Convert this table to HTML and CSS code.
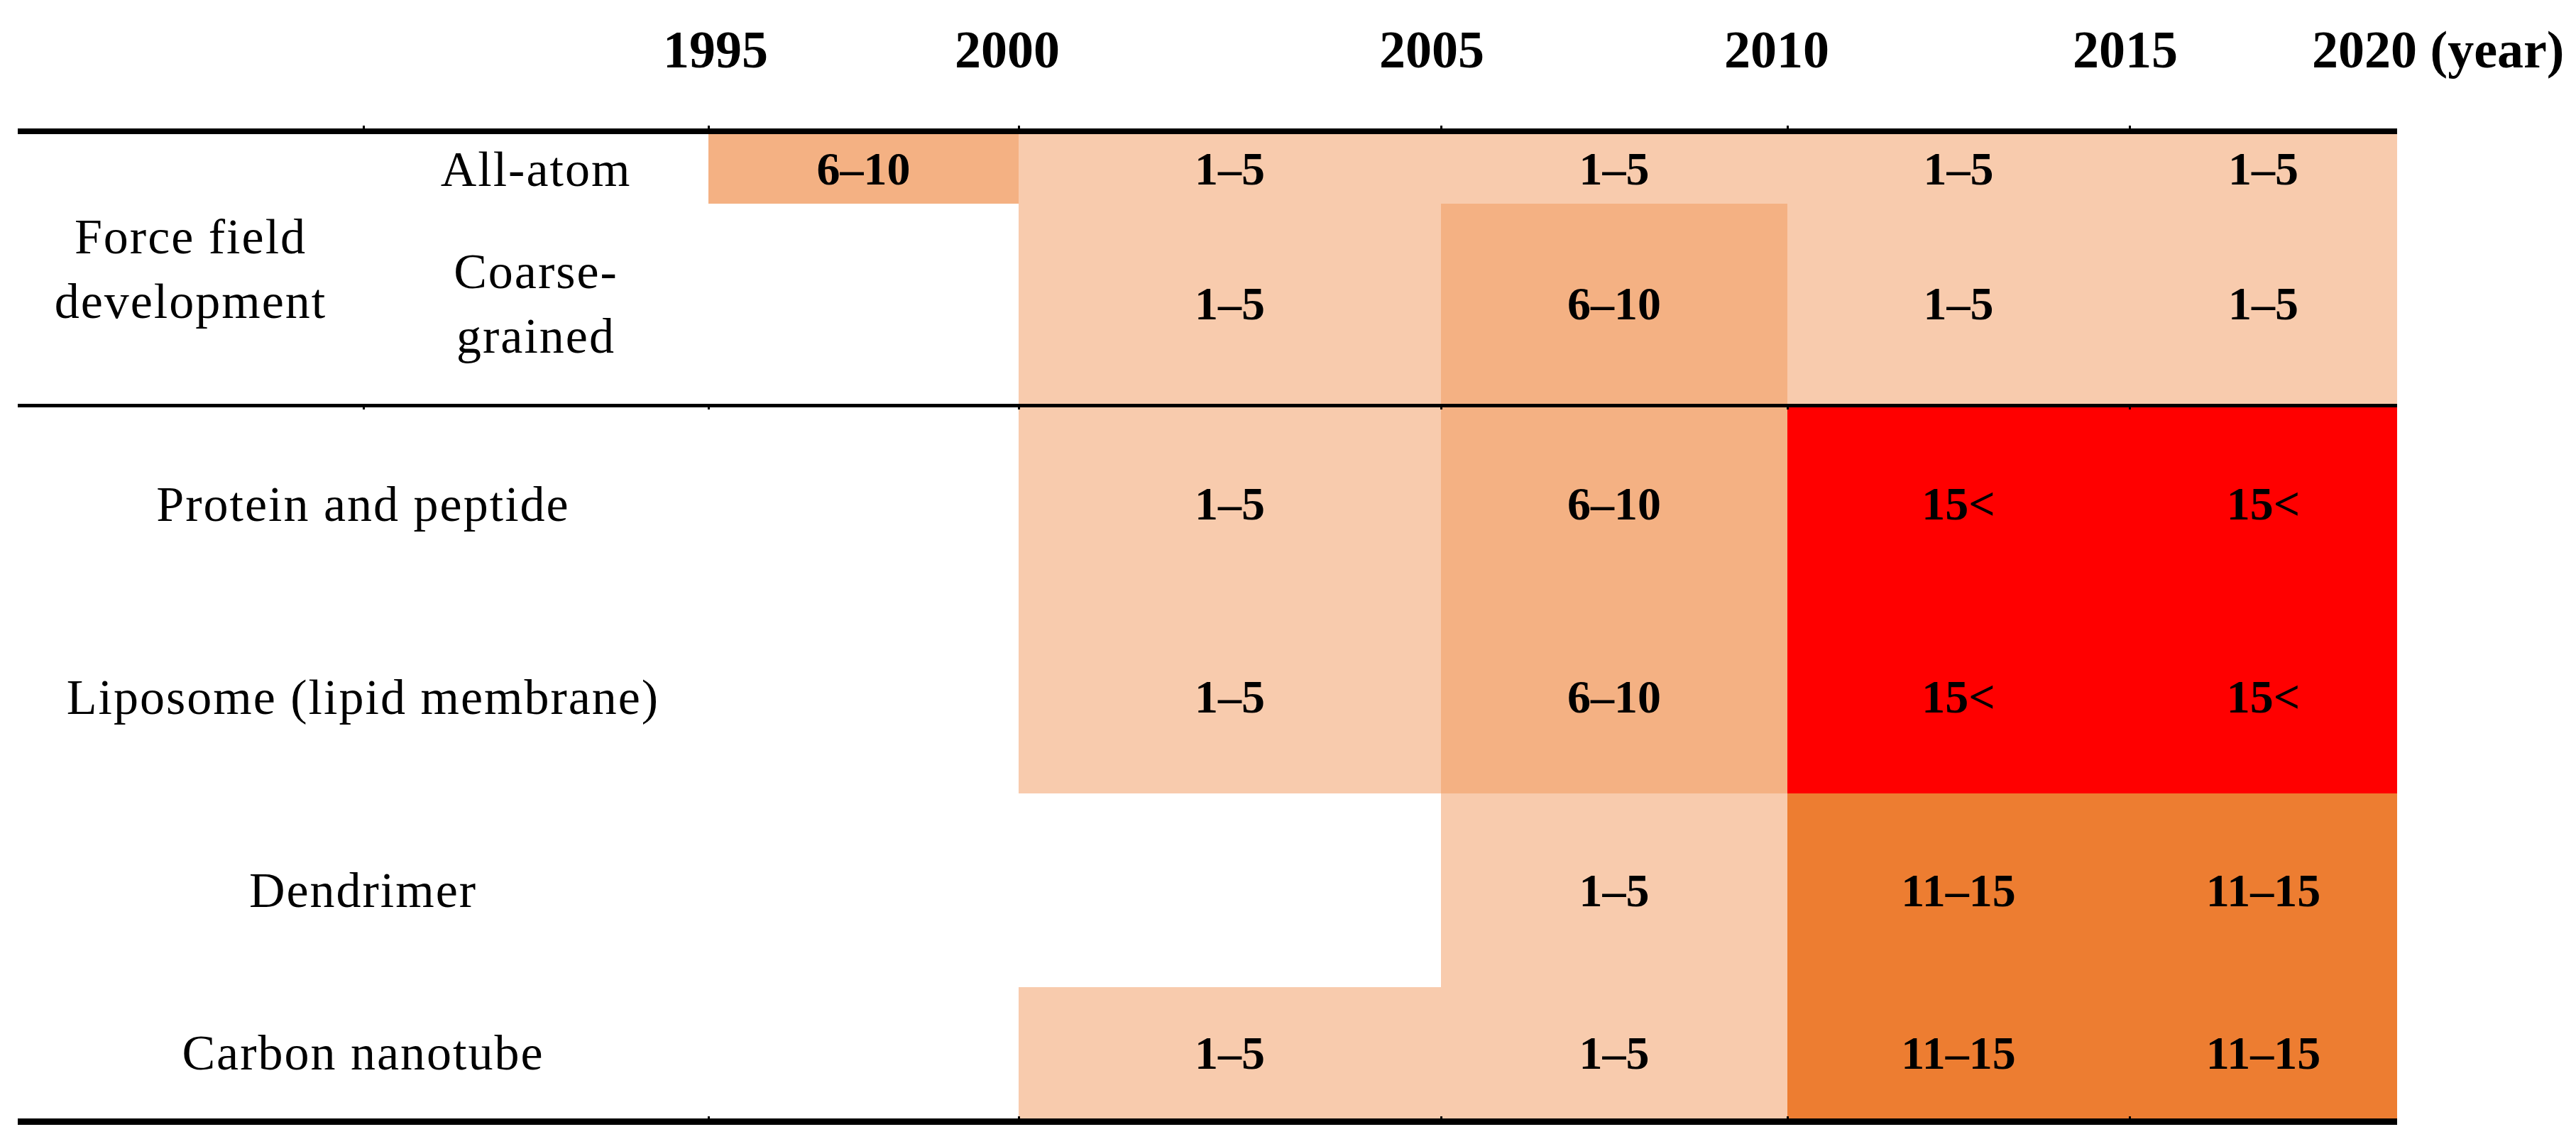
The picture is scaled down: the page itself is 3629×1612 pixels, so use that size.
FILE: index.html
```html
<!DOCTYPE html>
<html lang="en">
<head>
<meta charset="utf-8">
<title>Force field and simulation timeline</title>
<link rel="stylesheet" href="styles.css">
</head>
<body>
<div class="figure">
  <div class="years">
    <span></span>
    <span class="year">1995</span>
    <span class="year">2000</span>
    <span class="year">2005</span>
    <span class="year">2010</span>
    <span class="year">2015</span>
    <span class="year">2020 (year)</span>
  </div>
  <div class="ticks">
    <span></span><span class="tick"></span><span class="tick"></span><span class="tick"></span><span class="tick"></span><span class="tick"></span><span class="tick"></span>
  </div>
  <div class="table">
    <!-- row 1 -->
    <div class="cell label tall">Force field<br>development</div>
    <div class="cell label">All-atom</div>
    <div class="cell num mid">6–10</div>
    <div class="cell num light">1–5</div>
    <div class="cell num light">1–5</div>
    <div class="cell num light">1–5</div>
    <div class="cell num light">1–5</div>
    <!-- row 2 -->
    <div class="cell label">Coarse-<br>grained</div>
    <div class="cell"></div>
    <div class="cell num light">1–5</div>
    <div class="cell num mid">6–10</div>
    <div class="cell num light">1–5</div>
    <div class="cell num light">1–5</div>
    <!-- divider -->
    <div class="divider">
      <div class="ticks ticks-below">
        <span></span><span class="tick"></span><span class="tick"></span><span class="tick"></span><span class="tick"></span><span class="tick"></span><span class="tick"></span>
      </div>
    </div>
    <!-- protein -->
    <div class="cell label wide">Protein and peptide</div>
    <div class="cell"></div>
    <div class="cell num light">1–5</div>
    <div class="cell num mid">6–10</div>
    <div class="cell num max">15&lt;</div>
    <div class="cell num max">15&lt;</div>
    <!-- liposome -->
    <div class="cell label wide">Liposome (lipid membrane)</div>
    <div class="cell"></div>
    <div class="cell num light">1–5</div>
    <div class="cell num mid">6–10</div>
    <div class="cell num max">15&lt;</div>
    <div class="cell num max">15&lt;</div>
    <!-- dendrimer -->
    <div class="cell label wide">Dendrimer</div>
    <div class="cell"></div>
    <div class="cell"></div>
    <div class="cell num light">1–5</div>
    <div class="cell num hot">11–15</div>
    <div class="cell num hot">11–15</div>
    <!-- carbon nanotube -->
    <div class="cell label wide">Carbon nanotube</div>
    <div class="cell"></div>
    <div class="cell num light">1–5</div>
    <div class="cell num light">1–5</div>
    <div class="cell num hot">11–15</div>
    <div class="cell num hot">11–15</div>

    <div class="ticks ticks-bottom">
      <span></span><span></span><span class="tick"></span><span class="tick"></span><span class="tick"></span><span class="tick"></span><span class="tick"></span>
    </div>
  </div>
</div>
</body>
</html>
```

FILE: styles.css
```css
html, body {
  margin: 0;
  padding: 0;
  background: #ffffff;
}

body {
  font-family: "Liberation Serif", "Times New Roman", serif;
  color: #000000;
}

.figure {
  padding-left: 25px;
  width: 3352px;
}

.years {
  display: grid;
  grid-template-columns: 909px 411px 598px 486px 491px 337px auto;
  box-sizing: border-box;
  height: 177px;
  padding-top: 29px;
  font-weight: 700;
  font-size: 74px;
  line-height: 82px;
  white-space: nowrap;
}

.ticks {
  display: grid;
  grid-template-columns: 487px 486px 437px 595px 488px 482px 377px;
  height: 4px;
}

.ticks .tick {
  border-left: 3px solid #000;
  margin-left: -1px;
}

.table {
  position: relative;
  display: grid;
  grid-template-columns: 487px 486px 437px 595px 488px 482px 377px;
  grid-template-rows: 98px 282px 5px 272px 272px 273px 185px;
  border-top: 8px solid #000;
  border-bottom: 9px solid #000;
}

.cell {
  display: flex;
  align-items: center;
  justify-content: center;
  text-align: center;
}

.label {
  font-size: 70px;
  letter-spacing: 2px;
  line-height: 91px;
}

.num {
  font-weight: 700;
  font-size: 66px;
}

.tall {
  grid-row: span 2;
}

.wide {
  grid-column: span 2;
}

.divider {
  grid-column: 1 / -1;
  position: relative;
  background: #000;
}

.ticks-below {
  position: absolute;
  left: 0;
  top: 100%;
  height: 3px;
}

.ticks-bottom {
  position: absolute;
  left: 0;
  bottom: 0;
  height: 3px;
}

.light {
  background: #f8cbad;
}

.mid {
  background: #f4b183;
}

.hot {
  background: #ed7d31;
}

.max {
  background: #ff0000;
}
```
